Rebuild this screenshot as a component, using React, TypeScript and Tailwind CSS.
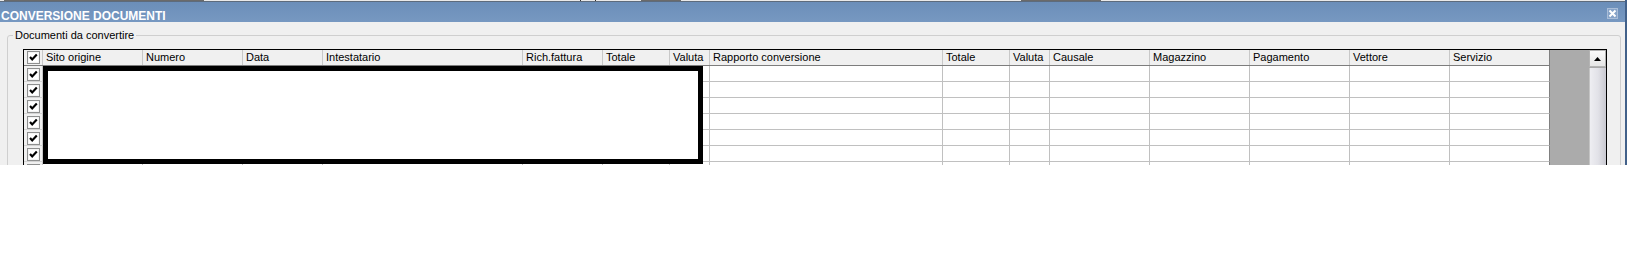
const cols = [
  { label: 'Sito origine', w: 'w-[100px]' },
  { label: 'Numero', w: 'w-[100px]' },
  { label: 'Data', w: 'w-[80px]' },
  { label: 'Intestatario', w: 'w-[200px]' },
  { label: 'Rich.fattura', w: 'w-[80px]' },
  { label: 'Totale', w: 'w-[67px]' },
  { label: 'Valuta', w: 'w-[40px]' },
  { label: 'Rapporto conversione', w: 'w-[233px]' },
  { label: 'Totale', w: 'w-[67px]' },
  { label: 'Valuta', w: 'w-[40px]' },
  { label: 'Causale', w: 'w-[100px]' },
  { label: 'Magazzino', w: 'w-[100px]' },
  { label: 'Pagamento', w: 'w-[100px]' },
  { label: 'Vettore', w: 'w-[100px]' },
  { label: 'Servizio', w: 'w-[100px]' },
];

// 7th row only peeks out under the bottom edge
const rows = [true, true, true, true, true, true, false];

function CheckBox({ checked }: { checked: boolean }) {
  return (
    <svg width="13" height="13" viewBox="0 0 13 13" className="block">
      <rect x="0.5" y="0.5" width="12" height="12" fill="#ffffff" stroke="#8e8f8f" />
      <rect x="1.5" y="1.5" width="10" height="10" fill="none" stroke="#f4f4f4" />
      {checked && (
        <polyline points="3,6 5.2,8.4 9.8,3.6" fill="none" stroke="#000000" strokeWidth="2.2" />
      )}
    </svg>
  );
}

export default function App() {
  return (
    <div className="h-[165px] overflow-hidden bg-white font-['Liberation_Sans',Arial,sans-serif] text-black">
      <div className="w-[1627px] border-r-2 border-[#42618a] bg-[#f0f0f0]">
        {/* strip of the window behind */}
        <div className="flex h-[2px] items-start border-b border-[#5d6b7c] bg-[#e9e9e9]">
          <div className="ml-[4px] h-[1px] w-[200px] bg-[#6a6a6a]" />
          <div className="ml-[376px] h-[1px] w-[1px] bg-[#333]" />
          <div className="ml-[14px] h-[1px] w-[1px] bg-[#333]" />
          <div className="ml-[45px] h-[1px] w-[40px] bg-[#6a6a6a]" />
          <div className="ml-[340px] h-[1px] w-[80px] bg-[#6a6a6a]" />
        </div>

        {/* title bar */}
        <div className="flex h-[20px] items-start justify-between bg-gradient-to-b from-[#6b8eb9] to-[#7798c1]">
          <div className="pl-[1px] pt-[8px] text-[12px] font-bold leading-[12px] text-white">CONVERSIONE DOCUMENTI</div>
          <div className="mr-[7px] mt-[6px] flex h-[11px] w-[11px] items-center justify-center border border-[#a9bdd7] bg-[#86a3c8]">
            <svg width="9" height="9" viewBox="0 0 9 9">
              <path d="M1.5 1.5 L7.5 7.5 M7.5 1.5 L1.5 7.5" stroke="#ffffff" strokeWidth="2" />
            </svg>
          </div>
        </div>

        <div className="pb-[40px]">
          <fieldset className="ml-[7px] mt-[7px] w-[1614px] rounded-[3px] border border-[#cfcfcf]">
            <legend className="ml-[5px] px-[2px] text-[11px] leading-[13px]">Documenti da convertire</legend>
            <div className="pl-[15px] pt-[7px]">
              <div className="relative flex w-[1584px] border border-b-0 border-black bg-white">
                <div className="w-[1526px]">
                  {/* header */}
                  <div className="flex h-[16px] border-b border-[#7d7d7d] bg-[#f0f0f0] text-[11px] leading-[15px]">
                    <div className="flex w-[19px] items-center justify-center border-r border-[#c8c8c8]">
                      <CheckBox checked />
                    </div>
                    {cols.map((c, i) => (
                      <div
                        key={i}
                        className={`${c.w} overflow-hidden whitespace-nowrap border-r pl-[3px] ${i === cols.length - 1 ? 'border-[#808080]' : 'border-[#c8c8c8]'}`}
                      >
                        {c.label}
                      </div>
                    ))}
                  </div>
                  {/* rows */}
                  {rows.map((checked, ri) => (
                    <div key={ri} className="flex h-[16px]">
                      <div className="flex w-[19px] items-start justify-center border-r border-b border-r-[#c8c8c8] border-b-[#d4d4d4] bg-[#f0f0f0] pt-[2px]">
                        <CheckBox checked={checked} />
                      </div>
                      {cols.map((c, i) => (
                        <div
                          key={i}
                          className={`${c.w} border-r border-b border-b-[#c0c0c0] ${i === cols.length - 1 ? 'border-r-[#808080]' : 'border-r-[#c0c0c0]'}`}
                        />
                      ))}
                    </div>
                  ))}
                </div>
                <div className="w-[39px] bg-[#ababab]" />
                {/* scrollbar */}
                <div className="flex w-[17px] flex-col bg-[#e2e2e8]">
                  <div className="flex h-[17px] items-center justify-center border border-[#b4b4b4] bg-gradient-to-b from-[#fafafa] to-[#e6e6e6]">
                    <svg width="7" height="4" viewBox="0 0 7 4">
                      <path d="M3.5 0 L7 4 L0 4 Z" fill="#000" />
                    </svg>
                  </div>
                  <div className="h-[1px] bg-[#a9a9a9]" />
                  <div className="h-[200px] border-l border-[#c4c4c4] bg-gradient-to-r from-[#eeeef2] via-[#e2e2e8] to-[#c9c9d1]" />
                </div>

                {/* redaction box */}
                <div className="absolute left-[19px] top-[16px] h-[98px] w-[660px] border-[5px] border-black bg-white" />
              </div>
            </div>
          </fieldset>
        </div>
      </div>
    </div>
  );
}
